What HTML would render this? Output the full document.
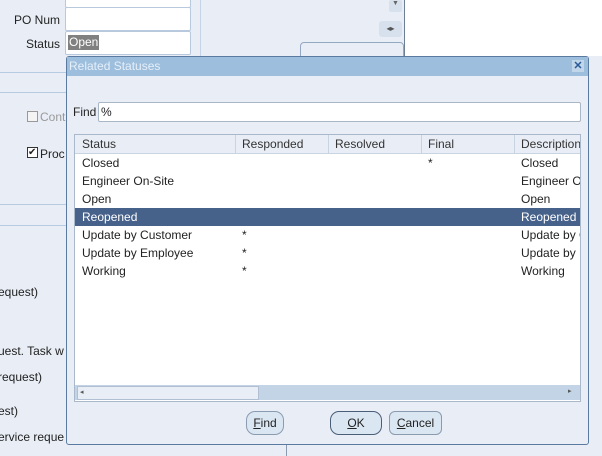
<!DOCTYPE html>
<html><head><style>
html,body{margin:0;width:602px;height:456px;overflow:hidden}
body{position:relative;background:#e9eef6;font-family:"Liberation Sans",Arial,sans-serif;font-size:12px;color:#222;white-space:nowrap}
.a{position:absolute}
.in{position:absolute;background:#fff;border:1px solid #b9c9dd;border-radius:2px}
.lbl{position:absolute;text-align:right;width:60px;font-size:12px}
.row{position:absolute;left:0;width:505px;height:18px;line-height:18px;overflow:hidden}
.row span{position:absolute}
.btn{position:absolute;top:354px;height:22px;line-height:22px;border:1px solid #8a9bb0;border-radius:9px;background:#dbe6f3;text-align:center;font-size:12px}
</style></head><body>
<div class="a" style="left:404px;top:0;width:198px;height:56px;background:#fff"></div>
<div class="a" style="left:404px;top:0;width:1px;height:56px;background:#6d7f96"></div>
<div class="a" style="left:200px;top:0;width:1px;height:56px;background:#c6d4e6"></div>
<div class="a" style="left:389px;top:0;width:13px;height:12px;background:#d7e1ee;border-radius:2px;font-size:7px;text-align:center;color:#666">▼</div>
<div class="a" style="left:379px;top:21px;width:23px;height:16px;background:#d7e1ee;border-radius:3px;font-size:8px;text-align:center;line-height:16px;color:#555">◂▸</div>
<div class="a" style="left:300px;top:42px;width:102px;height:20px;border:1px solid #95a8c2;border-radius:4px"></div>
<div class="in" style="left:65px;top:-4px;width:124px;height:10px"></div>
<div class="in" style="left:65px;top:7px;width:124px;height:22px"></div>
<div class="in" style="left:65px;top:31px;width:124px;height:22px"></div>
<div class="lbl" style="left:0;top:13px">PO Num</div>
<div class="lbl" style="left:0;top:37px">Status</div>
<div class="a" style="left:68px;top:35px;background:#808080;color:#fff;padding:0 1px;line-height:15px">Open</div>
<div class="a" style="left:0;top:72px;width:66px;height:1px;background:#b7cbe3"></div>
<div class="a" style="left:0;top:92px;width:66px;height:1px;background:#b7cbe3"></div>
<div class="a" style="left:0;top:204px;width:66px;height:1px;background:#b7cbe3"></div>
<div class="a" style="left:0;top:225px;width:66px;height:1px;background:#b7cbe3"></div>
<div class="a" style="left:27px;top:111px;width:9px;height:9px;border:1px solid #999;background:#f4f4f4"></div>
<div class="a" style="left:40px;top:110px;color:#999">Cont</div>
<div class="a" style="left:27px;top:147px;width:9px;height:9px;border:1px solid #333;background:#fff;font-size:10px;line-height:9px">✔</div>
<div class="a" style="left:40px;top:147px">Proc</div>
<div class="a" style="left:-2px;top:285px">equest)</div>
<div class="a" style="left:-2px;top:344px">uest. Task w</div>
<div class="a" style="left:-2px;top:370px">request)</div>
<div class="a" style="left:-2px;top:404px">est)</div>
<div class="a" style="left:-2px;top:430px">ervice reque</div>
<div class="a" style="left:286px;top:440px;width:1px;height:16px;background:#8a9bb0"></div>

<div class="a" style="left:66px;top:56px;width:521px;height:387px;background:#e9eef6;border:1px solid #5a7aa0;border-radius:3px">
 <div class="a" style="left:0;top:0;width:521px;height:19px;background:#9dbfdd;color:#e6eef8;line-height:19px;text-indent:2px">Related Statuses</div>
 <div class="a" style="left:505px;top:3px;width:12px;height:12px;background:#c2d6ea;color:#2a5a9a;font-size:11px;line-height:12px;text-align:center;font-weight:bold">✕</div>
 <div class="a" style="left:6px;top:48px">Find</div>
 <div class="in" style="left:31px;top:45px;width:481px;height:18px;border-color:#a9b6c6;line-height:18px;text-indent:2px">%</div>
 <div class="a" style="left:7px;top:77px;width:505px;height:266px;background:#fff;border:1px solid #a9b8cb;overflow:hidden">
  <div class="a" style="left:0;top:0;width:505px;height:18px;background:#e9eef6;border-bottom:1px solid #c8d4e2"></div>
  <div class="row" style="top:0;color:#333"><span style="left:7px">Status</span><span style="left:167px">Responded</span><span style="left:260px">Resolved</span><span style="left:353px">Final</span><span style="left:446px">Description</span></div>
  <div class="a" style="left:160px;top:0;width:1px;height:18px;background:#c8d4e2"></div>
  <div class="a" style="left:253px;top:0;width:1px;height:18px;background:#c8d4e2"></div>
  <div class="a" style="left:346px;top:0;width:1px;height:18px;background:#c8d4e2"></div>
  <div class="a" style="left:439px;top:0;width:1px;height:18px;background:#c8d4e2"></div>
  <div class="row" style="top:19px"><span style="left:7px">Closed</span><span style="left:353px">*</span><span style="left:446px">Closed</span></div>
  <div class="row" style="top:37px"><span style="left:7px">Engineer On-Site</span><span style="left:446px">Engineer On</span></div>
  <div class="row" style="top:55px"><span style="left:7px">Open</span><span style="left:446px">Open</span></div>
  <div class="row" style="top:73px;background:#46618a;color:#fff"><span style="left:7px">Reopened</span><span style="left:446px">Reopened</span></div>
  <div class="row" style="top:91px"><span style="left:7px">Update by Customer</span><span style="left:167px">*</span><span style="left:446px">Update by C</span></div>
  <div class="row" style="top:109px"><span style="left:7px">Update by Employee</span><span style="left:167px">*</span><span style="left:446px">Update by E</span></div>
  <div class="row" style="top:127px"><span style="left:7px">Working</span><span style="left:167px">*</span><span style="left:446px">Working</span></div>
  <div class="a" style="left:0;top:250px;width:505px;height:15px;background:#c3d4e7"></div>
  <div class="a" style="left:2px;top:251px;width:180px;height:12px;background:#e9eef6;border:1px solid #b0bfd2;font-size:7px;line-height:12px;color:#555">&nbsp;◂</div>
  <div class="a" style="left:493px;top:252px;font-size:7px;color:#555">▸</div>
 </div>
 <div class="btn" style="left:179px;width:36px"><u>F</u>ind</div>
 <div class="btn" style="left:263px;width:50px;border:1px solid #4a5e78"><u>O</u>K</div>
 <div class="btn" style="left:322px;width:51px;border-radius:6px"><u>C</u>ancel</div>
</div>
</body></html>
